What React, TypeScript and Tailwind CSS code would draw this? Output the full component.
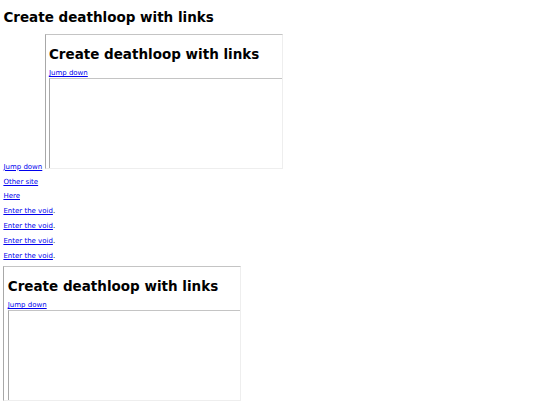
// Page shown at 0.42 scale: a heading, a "Jump down" link next to an
// iframe-like frame, a few link paragraphs and a second frame.
const linkCls = 'text-[#0000ee] underline';

function Frame({ depth }: { depth: number }) {
  return (
    <span className="inline-block w-[238px] h-[135px] overflow-hidden align-baseline bg-white border border-t-[#c4c4c4] border-l-[#a8a8a8] border-r-[#eeeeee] border-b-[#eeeeee] box-border">
      {depth < 2 && <Page depth={depth} />}
    </span>
  );
}

function Page({ depth }: { depth: number }) {
  // nested pages only show their top part, the rest is cut by the frame
  const full = depth === 0;
  return (
    <div className={`block px-[3.4px] text-left text-black font-['DejaVu_Sans',sans-serif] text-[7px] leading-[7.86px] ${full ? '' : 'pt-[2px]'}`}>
      <h1 className="font-bold text-[13.5px] leading-[15.7px] mt-[10px] mb-[8px]">Create deathloop with links</h1>
      <div>
        <a href="#down" className={linkCls}>Jump down</a>{' '}
        <Frame depth={depth + 1} />
      </div>
      {full && (
        <>
          <p className="my-[7px]">
            <a href="#other" className={linkCls}>Other site</a>
          </p>
          <p className="my-[7px]">
            <a href="#here" className={linkCls}>Here</a>
          </p>
          {[0, 1, 2, 3].map((i) => (
            <p key={i} className={i === 3 ? 'mt-[7px] mb-[5px]' : 'my-[7px]'}>
              <a href="#void" className={linkCls}>Enter the void</a>.
            </p>
          ))}
          <div>
            <Frame depth={depth + 1} />
          </div>
        </>
      )}
    </div>
  );
}

export default function App() {
  return (
    <div className="min-h-screen bg-white overflow-hidden">
      <Page depth={0} />
    </div>
  );
}
